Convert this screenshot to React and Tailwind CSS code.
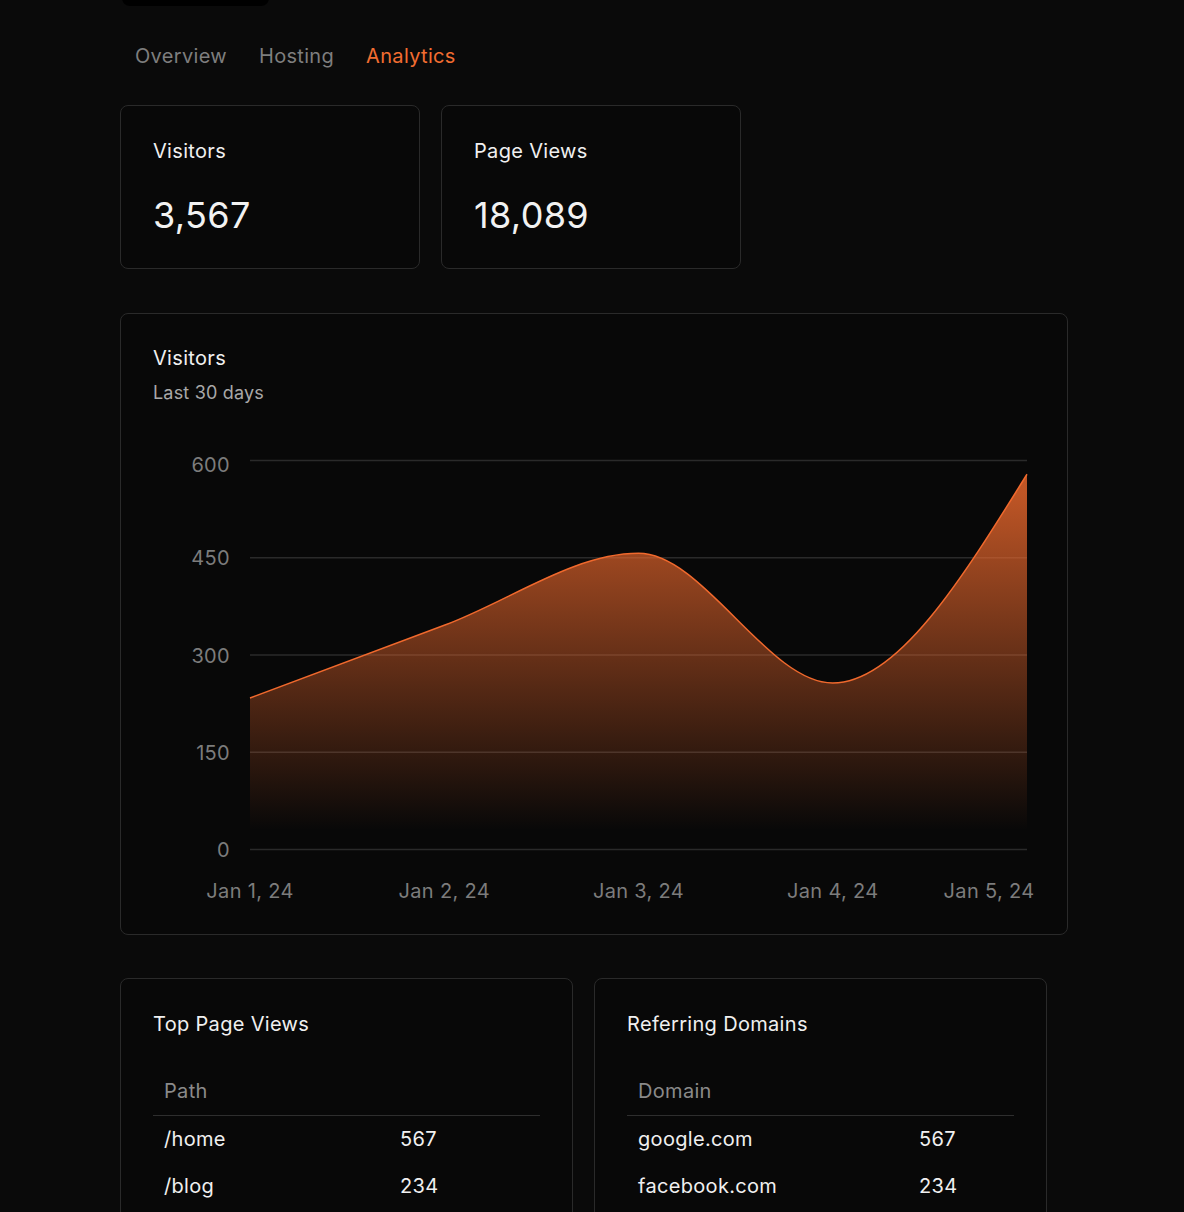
import React from "react";

const font = { fontFamily: "Inter, 'Noto Sans', sans-serif" };

function monotonePath(pts) {
  const n = pts.length;
  const sign = (v) => (v < 0 ? -1 : 1);
  const t = new Array(n).fill(0);
  for (let i = 1; i < n - 1; i++) {
    const [x0, y0] = pts[i - 1];
    const [x1, y1] = pts[i];
    const [x2, y2] = pts[i + 1];
    const h0 = x1 - x0, h1 = x2 - x1;
    const s0 = (y1 - y0) / h0, s1 = (y2 - y1) / h1;
    const p = (s0 * h1 + s1 * h0) / (h0 + h1);
    t[i] = (sign(s0) + sign(s1)) * Math.min(Math.abs(s0), Math.abs(s1), 0.5 * Math.abs(p)) || 0;
  }
  {
    const [x0, y0] = pts[0];
    const [x1, y1] = pts[1];
    const h = x1 - x0;
    t[0] = (3 * (y1 - y0) / h - t[1]) / 2;
  }
  {
    const [x0, y0] = pts[n - 2];
    const [x1, y1] = pts[n - 1];
    const h = x1 - x0;
    t[n - 1] = (3 * (y1 - y0) / h - t[n - 2]) / 2;
  }
  let d = `M${pts[0][0]},${pts[0][1]}`;
  for (let i = 0; i < n - 1; i++) {
    const [x0, y0] = pts[i];
    const [x1, y1] = pts[i + 1];
    const dx = (x1 - x0) / 3;
    d += `C${x0 + dx},${y0 + dx * t[i]},${x1 - dx},${y1 - dx * t[i + 1]},${x1},${y1}`;
  }
  return d;
}

function Chart() {
  // svg origin at page (153, 430)
  const left = 97, right = 874;
  const top = 30, bottom = 419;
  const vals = [233, 345, 456, 256, 578];
  const xs = vals.map((_, i) => left + ((right - left) * i) / 4);
  const ys = vals.map((v) => bottom - (v / 600) * (bottom - top));
  const pts = xs.map((x, i) => [x, ys[i]]);
  const line = monotonePath(pts);
  const area = `${line}L${right},${bottom}L${left},${bottom}Z`;
  const ticks = [600, 450, 300, 150, 0];
  const labels = ["Jan 1, 24", "Jan 2, 24", "Jan 3, 24", "Jan 4, 24", "Jan 5, 24"];
  const labelX = [xs[0], xs[1], xs[2], xs[3], 836];
  return (
    <svg width="881" height="484" className="block overflow-visible" style={font}>
      <defs>
        <linearGradient id="fillG" x1="0" y1="0" x2="0" y2="1">
          <stop offset="5%" stopColor="#f26b2e" stopOpacity="0.78" />
          <stop offset="95%" stopColor="#f26b2e" stopOpacity="0" />
        </linearGradient>
      </defs>
      {ticks.map((tk) => {
        const y = bottom - (tk / 600) * (bottom - top);
        return (
          <g key={tk}>
            <line x1={left} x2={right} y1={y + 0.5} y2={y + 0.5} stroke="#2a2a2a" strokeWidth="1.5" />
            <text
              x={77}
              y={tk === 600 ? y + 5 : y + 1}
              textAnchor="end"
              dominantBaseline="central"
              fontSize="20"
              fill="#7c7c7c"
            >
              {tk}
            </text>
          </g>
        );
      })}
      <path d={area} fill="url(#fillG)" />
      <path d={line} fill="none" stroke="#f0692d" strokeWidth="1.5" />
      {labels.map((l, i) => (
        <text
          key={l}
          x={labelX[i]}
          y={461}
          textAnchor="middle"
          dominantBaseline="central"
          fontSize="20"
          fill="#7c7c7c"
        >
          {l}
        </text>
      ))}
    </svg>
  );
}

function StatCard({ title, value }) {
  return (
    <div className="w-[300px] h-[164px] rounded-lg border border-[#2a2a2a] bg-[#080808] px-8 pt-8">
      <div className="text-[20px] leading-6 mt-[1px] text-[#f0f0f0]">{title}</div>
      <div className="mt-[32px] text-[36px] leading-10 tracking-[0.01em] text-[#f2f2f2]">{value}</div>
    </div>
  );
}

function TableCard({ title, head, col, rows }) {
  return (
    <div className="w-[453px] h-[250px] rounded-lg border border-[#2a2a2a] bg-[#080808] px-8 pt-8">
      <div className="text-[20px] leading-6 mt-[1px] text-[#f0f0f0]">{title}</div>
      <table className="mt-[31px] w-full text-[20px]">
        <thead>
          <tr className="h-[48px] border-b border-[#2e2e2e]">
            <th className="text-left font-normal text-[#8a8a8a] px-[11px]" style={{ width: col }}>
              {head}
            </th>
            <th></th>
          </tr>
        </thead>
        <tbody>
          {rows.map(([a, b]) => (
            <tr key={a} className="h-[47px]">
              <td className="px-[11px] text-[#f0f0f0]">{a}</td>
              <td className="px-[11px] text-[#f0f0f0]">{b}</td>
            </tr>
          ))}
        </tbody>
      </table>
    </div>
  );
}

export default function App() {
  return (
    <div className="h-[1212px] bg-[#0a0a0a] overflow-hidden tracking-[0.02em]" style={font}>
      <div className="pl-[120px]">
        <div className="ml-[2px] -mt-[34px] h-[40px] w-[147px] rounded-lg bg-black" />
        <div className="-ml-[1px] mt-[36px] flex h-7 items-center text-[20px] leading-7">
          <span className="px-4 text-[#7e7e7e]">Overview</span>
          <span className="px-4 text-[#7e7e7e]">Hosting</span>
          <span className="px-4 text-[#f26d31]">Analytics</span>
        </div>
        <div className="mt-[35px] flex gap-[21px]">
          <StatCard title="Visitors" value="3,567" />
          <StatCard title="Page Views" value="18,089" />
        </div>
        <div className="mt-[44px] w-[948px] h-[622px] rounded-lg border border-[#2a2a2a] bg-[#080808] px-8 pt-8">
          <div className="text-[20px] leading-6 text-[#f0f0f0]">Visitors</div>
          <div className="mt-[11px] text-[18px] leading-6 tracking-[0.01em] text-[#a8a8a8]">Last 30 days</div>
          <div className="mt-[25px] h-[472px]">
            <Chart />
          </div>
        </div>
        <div className="mt-[43px] flex gap-[21px]">
          <TableCard
            title="Top Page Views"
            head="Path"
            col="236px"
            rows={[
              ["/home", "567"],
              ["/blog", "234"],
            ]}
          />
          <TableCard
            title="Referring Domains"
            head="Domain"
            col="281px"
            rows={[
              ["google.com", "567"],
              ["facebook.com", "234"],
            ]}
          />
        </div>
      </div>
    </div>
  );
}
